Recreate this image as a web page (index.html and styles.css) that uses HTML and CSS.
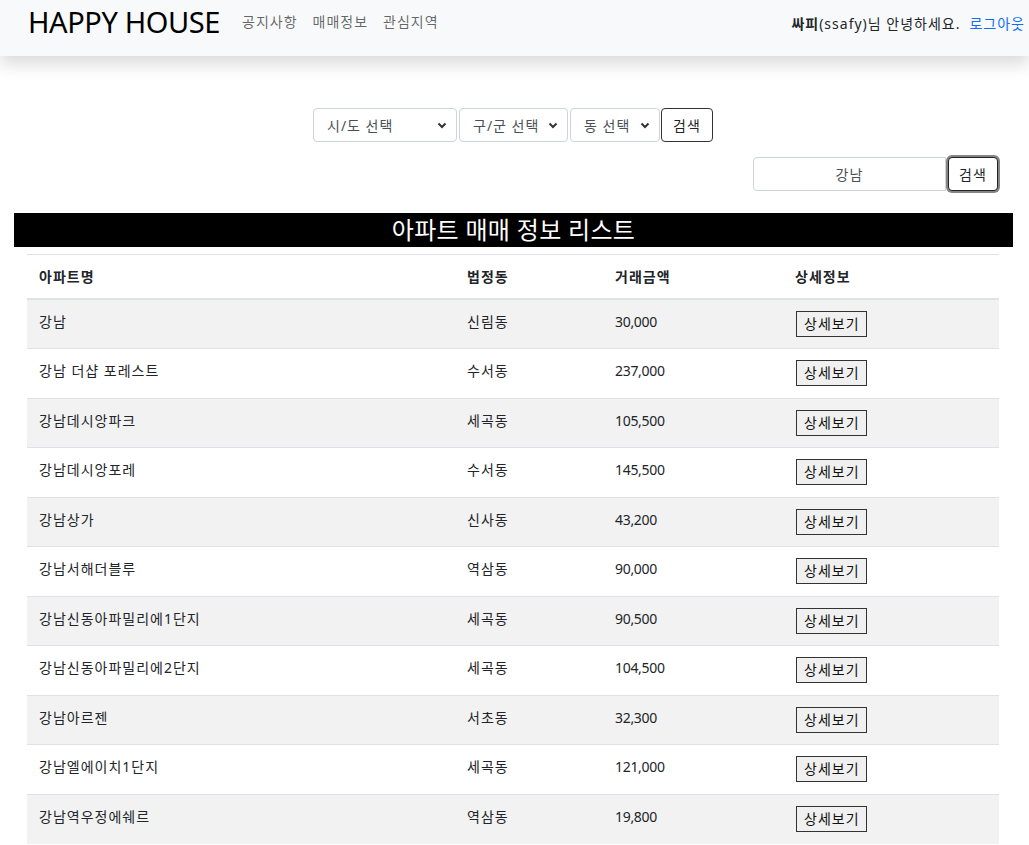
FILE: index.html
```html
<!DOCTYPE html>
<html lang="ko">
<head>
<meta charset="utf-8">
<title>HAPPY HOUSE</title>
<link rel="stylesheet" href="styles.css">
</head>
<body>
<nav class="navbar">
  <a class="brand" href="#">HAPPY HOUSE</a>
  <ul class="nav-links">
    <li><a href="#">공지사항</a></li>
    <li><a href="#">매매정보</a></li>
    <li><a href="#">관심지역</a></li>
  </ul>
  <div class="user">
    <span class="greet"><b>싸피</b>(ssafy)님 안녕하세요.</span>
    <a class="logout" href="#">로그아웃</a>
  </div>
</nav>

<main class="content">
  <form class="region-form">
    <select class="sel sel-sido"><option>시/도 선택</option></select>
    <select class="sel sel-gugun"><option>구/군 선택</option></select>
    <select class="sel sel-dong"><option>동 선택</option></select>
    <button type="button" class="btn-outline">검색</button>
  </form>

  <form class="name-form">
    <input class="name-input" type="text" value="강남">
    <button type="button" class="btn-outline btn-focus">검색</button>
  </form>

  <h2 class="list-title">아파트 매매 정보 리스트</h2>

  <table class="apt-table">
    <colgroup>
      <col class="c1"><col class="c2"><col class="c3"><col class="c4">
    </colgroup>
    <thead>
      <tr><th>아파트명</th><th>법정동</th><th>거래금액</th><th>상세정보</th></tr>
    </thead>
    <tbody>
      <tr><td>강남</td><td>신림동</td><td class="num">30,000</td><td><button type="button" class="btn-detail">상세보기</button></td></tr>
      <tr><td>강남 더샵 포레스트</td><td>수서동</td><td class="num">237,000</td><td><button type="button" class="btn-detail">상세보기</button></td></tr>
      <tr><td>강남데시앙파크</td><td>세곡동</td><td class="num">105,500</td><td><button type="button" class="btn-detail">상세보기</button></td></tr>
      <tr><td>강남데시앙포레</td><td>수서동</td><td class="num">145,500</td><td><button type="button" class="btn-detail">상세보기</button></td></tr>
      <tr><td>강남상가</td><td>신사동</td><td class="num">43,200</td><td><button type="button" class="btn-detail">상세보기</button></td></tr>
      <tr><td>강남서해더블루</td><td>역삼동</td><td class="num">90,000</td><td><button type="button" class="btn-detail">상세보기</button></td></tr>
      <tr><td>강남신동아파밀리에1단지</td><td>세곡동</td><td class="num">90,500</td><td><button type="button" class="btn-detail">상세보기</button></td></tr>
      <tr><td>강남신동아파밀리에2단지</td><td>세곡동</td><td class="num">104,500</td><td><button type="button" class="btn-detail">상세보기</button></td></tr>
      <tr><td>강남아르젠</td><td>서초동</td><td class="num">32,300</td><td><button type="button" class="btn-detail">상세보기</button></td></tr>
      <tr><td>강남엘에이치1단지</td><td>세곡동</td><td class="num">121,000</td><td><button type="button" class="btn-detail">상세보기</button></td></tr>
      <tr><td>강남역우정에쉐르</td><td>역삼동</td><td class="num">19,800</td><td><button type="button" class="btn-detail">상세보기</button></td></tr>
    </tbody>
  </table>
</main>
</body>
</html>
```

FILE: styles.css
```css
* { box-sizing: border-box; }

html, body {
  margin: 0;
  padding: 0;
  background: #fff;
}

body {
  font-family: "Noto Sans", "Noto Sans CJK KR", sans-serif;
  font-size: 14px;
  line-height: 1.5;
  color: #212529;
  letter-spacing: 1px;
}

a { text-decoration: none; }

/* ---------- navbar ---------- */
.navbar {
  display: flex;
  align-items: center;
  height: 56px;
  padding: 0 4px 14px 28px;
  background: #f8f9fa;
  box-shadow: 0 8px 16px rgba(0, 0, 0, 0.15);
  position: relative;
  z-index: 1;
}

.brand {
  font-size: 29px;
  line-height: 1;
  color: #000;
  margin-right: 22px;
  letter-spacing: -0.4px;
}

.nav-links {
  display: flex;
  gap: 15px;
  list-style: none;
  margin: 0;
  padding: 0;
}

.nav-links a {
  color: rgba(0, 0, 0, 0.6);
  font-size: 14px;
}

.user {
  margin-left: auto;
  display: flex;
  gap: 9px;
  font-size: 14px;
  color: #212529;
  padding-top: 4px;
}

.user b { font-weight: 700; }

.logout { color: #0d6efd; }

/* ---------- forms ---------- */
.content {
  padding-top: 52px;
}

.region-form {
  display: flex;
  justify-content: center;
  gap: 2px;
  padding-right: 3px;
}

.sel {
  height: 34px;
  border: 1px solid #ced4da;
  border-radius: 4px;
  background: #fff url("data:image/svg+xml,%3Csvg xmlns='http://www.w3.org/2000/svg' width='10' height='8' viewBox='0 0 10 8'%3E%3Cpath d='M1.5 2.5 L5 6 L8.5 2.5' fill='none' stroke='%23333' stroke-width='2'/%3E%3C/svg%3E") no-repeat right 9px center;
  appearance: none;
  -webkit-appearance: none;
  font-family: inherit;
  font-size: 14px;
  letter-spacing: 1px;
  color: #495057;
  padding: 0 22px 0 13px;
}

.sel-sido { width: 144px; }
.sel-gugun { width: 109px; }
.sel-dong { width: 90px; }

.btn-outline {
  height: 34px;
  border: 1px solid #333;
  border-radius: 4px;
  background: #fff;
  font-family: inherit;
  font-size: 14px;
  letter-spacing: 1px;
  color: #212529;
  padding: 0 10px;
}

.region-form .btn-outline { width: 52px; margin-left: -1px; }

.name-form {
  display: flex;
  justify-content: flex-end;
  margin-top: 15px;
  padding-right: 31px;
}

.name-input {
  width: 193px;
  height: 34px;
  border: 1px solid #ced4da;
  border-radius: 4px 0 0 4px;
  text-align: center;
  font-family: inherit;
  font-size: 14px;
  letter-spacing: 1px;
  color: #495057;
  padding: 0 8px;
}

.btn-focus {
  width: 50px;
  margin-left: 2px;
  border-radius: 4px;
  border: 1px solid #222;
  box-shadow: 0 0 0 2px #858585;
}

/* ---------- title ---------- */
.list-title {
  margin: 22px 16px 7px 14px;
  height: 34px;
  line-height: 34px;
  background: #000;
  color: #fff;
  text-align: center;
  font-size: 24px;
  font-weight: 400;
  letter-spacing: 0.3px;
}

/* ---------- table ---------- */
.apt-table {
  margin-left: 27px;
  width: 972px;
  border-collapse: collapse;
  table-layout: fixed;
}

.c1 { width: 428px; }
.c2 { width: 148px; }
.c3 { width: 180px; }
.c4 { width: 216px; }

.apt-table th,
.apt-table td {
  text-align: left;
  vertical-align: top;
  padding: 11px 12px 11px;
  border-top: 1px solid #dee2e6;
  font-size: 14px;
  line-height: 21px;
}

.apt-table th {
  font-weight: 700;
  border-bottom: 2px solid #dee2e6;
}

.apt-table td {
  height: 49.5px;
}

.apt-table td.num {
  letter-spacing: -0.3px;
}

.apt-table tbody tr:nth-child(odd) {
  background: #f2f2f2;
}

.btn-detail {
  height: 26px;
  margin-left: 1px;
  padding: 0 6px 0 7px;
  border: 1px solid #333;
  background: #f0f0f0;
  font-family: inherit;
  font-size: 14px;
  letter-spacing: 1px;
  line-height: 22px;
  color: #111;
  vertical-align: top;
}
```
